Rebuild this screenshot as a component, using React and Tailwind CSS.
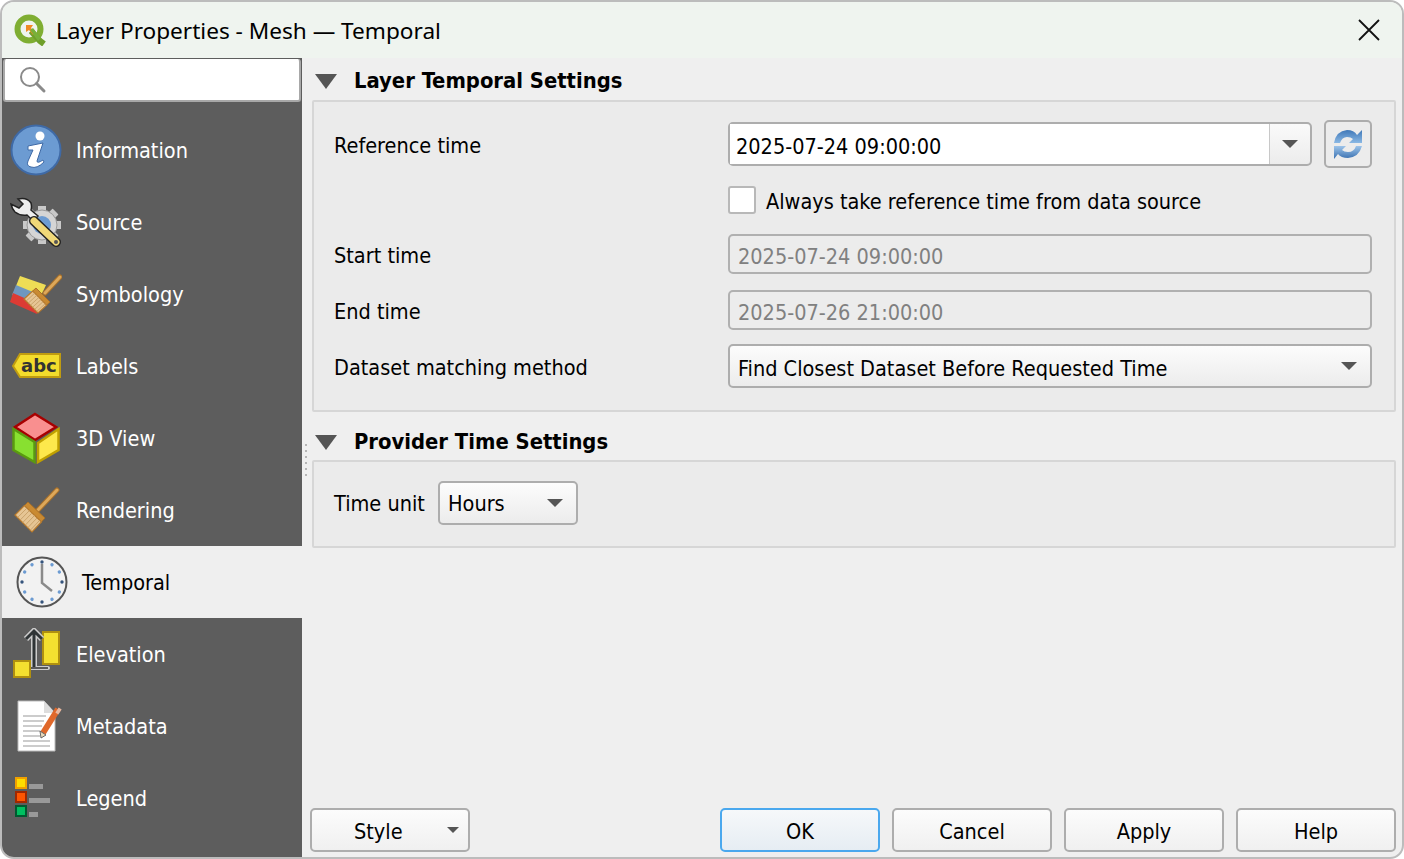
const font = "font-['DejaVu_Sans_Condensed','DejaVu_Sans',sans-serif]"

function Tri({ className }) {
  return (
    <svg className={className} viewBox="0 0 16 10" preserveAspectRatio="none">
      <path d="M0 0H16L8 10Z" fill="#555" />
    </svg>
  )
}

function QgisLogo() {
  return (
    <svg className="h-[32px] w-[32px] flex-none" viewBox="0 0 32 32">
      <circle cx="15" cy="15" r="11.5" fill="none" stroke="#7fae32" strokeWidth="6" />
      <path d="M17 17L26 27L30 30" fill="none" stroke="#6f9f2a" strokeWidth="6" />
      <path d="M12 11H19L17 14L21 19L19 21L15 16L12 18Z" fill="#f08a24" />
      <path d="M16 16L19 14L27 24L24 27Z" fill="#79b03a" />
    </svg>
  )
}

function SearchIcon() {
  return (
    <svg className="h-[28px] w-[28px]" viewBox="0 0 28 28" fill="none" stroke="#8a8a8a">
      <circle cx="11" cy="11" r="9" strokeWidth="2" />
      <path d="M17.5 17.5L25 25" strokeWidth="3" strokeLinecap="round" />
    </svg>
  )
}

function InfoIcon() {
  return (
    <svg viewBox="0 0 52 52" className="h-[52px] w-[52px]">
      <circle cx="26" cy="26" r="24.5" fill="#6c9bd2" stroke="#3f6aa6" strokeWidth="2" />
      <circle cx="30" cy="12" r="4.5" fill="#fff" />
      <path d="M18 22L33 19L27 37Q27 40 33 36L34 38Q27 45 21 43Q16 42 18 37L23 26L18 26Z" fill="#fff" stroke="#3f6aa6" strokeWidth="1" />
    </svg>
  )
}

function SourceIcon() {
  const teeth = [0, 45, 90, 135, 180, 225, 270, 315]
  return (
    <svg viewBox="0 0 52 52" className="h-[52px] w-[52px]">
      {teeth.map((a) => (
        <rect key={a} x="28" y="10" width="8" height="38" fill="#c9c9c9" transform={`rotate(${a} 32 29)`} />
      ))}
      <circle cx="32" cy="29" r="15" fill="#d5d5d5" stroke="#999" strokeWidth="1" />
      <circle cx="32" cy="29" r="9" fill="#6c9bd2" />
      <path d="M8 3Q17 1 21 7Q22 11 21 14L28 20L23 25L17 19Q10 20 5 16Q2 13 1 8L9 12L13 8Z" fill="#eee" stroke="#222" strokeWidth="1.5" />
      <path d="M24 25L46 46" stroke="#222" strokeWidth="10" strokeLinecap="round" />
      <path d="M24 25L46 46" stroke="#f0d878" strokeWidth="7" strokeLinecap="round" />
      <circle cx="46" cy="46" r="2" fill="#555" />
    </svg>
  )
}

// a, b: brush tip corners; c, d: the corners at the handle end
function Broom({ tip, base, a, b, c, d }) {
  const mix = (p, q, t) => [p[0] + (q[0] - p[0]) * t, p[1] + (q[1] - p[1]) * t]
  const c2 = mix(b, c, 0.72)
  const d2 = mix(a, d, 0.72)
  const pts = (list) => list.map((p) => p.join(',')).join(' ')
  const lines = [0.15, 0.3, 0.45, 0.6, 0.75, 0.9].map((t) => [mix(a, b, t), mix(d2, c2, t)])
  return (
    <g>
      <path d={`M${tip}L${base}`} stroke="#a8702a" strokeWidth="5" strokeLinecap="round" />
      <path d={`M${tip}L${base}`} stroke="#dda85a" strokeWidth="3" strokeLinecap="round" />
      <polygon points={pts([d2, c2, c, d])} fill="#c98a32" stroke="#a8702a" strokeWidth="1" />
      <polygon points={pts([a, b, c2, d2])} fill="#e6c594" stroke="#b87a2c" strokeWidth="1.2" />
      {lines.map(([p, q], i) => (
        <line key={i} x1={p[0]} y1={p[1]} x2={q[0]} y2={q[1]} stroke="#c39a62" strokeWidth="0.8" />
      ))}
    </g>
  )
}

function SymbologyIcon() {
  return (
    <svg viewBox="0 0 52 52" className="h-[52px] w-[52px]">
      <path d="M10 8L36 17L30 30L6 18Z" fill="#eedd55" />
      <path d="M6 17L30 27L28 38L2 27Z" fill="#6f97bf" />
      <path d="M3 25L28 36L27 46L0 34Z" fill="#dc3b34" />
      <Broom tip="50 9" base="35 25" a={[14, 31]} b={[28, 45]} c={[40, 34]} d={[26, 20]} />
    </svg>
  )
}

function LabelsIcon() {
  return (
    <svg viewBox="0 0 52 52" className="h-[52px] w-[52px]">
      <path d="M10 14H50V37H10L3 26Z" fill="#f3dc2c" stroke="#c09c10" strokeWidth="2" />
      <text x="11" y="32" fontFamily="DejaVu Sans" fontWeight="700" fontSize="18" fill="#333">abc</text>
    </svg>
  )
}

function ViewIcon() {
  return (
    <svg viewBox="0 0 52 52" className="h-[52px] w-[52px]">
      <path d="M25 2L46 15L25 28L5 15Z" fill="#f98f8f" stroke="#a80000" strokeWidth="2.5" />
      <path d="M3.5 17L24.5 30V50L3.5 38Z" fill="#88e030" stroke="#5a9a10" strokeWidth="2.5" />
      <path d="M28 31L48.500 17V38L28 50Z" fill="#fde84c" stroke="#c0a000" strokeWidth="2.5" />
    </svg>
  )
}

function RenderingIcon() {
  return (
    <svg viewBox="0 0 52 52" className="h-[52px] w-[52px]">
      <Broom tip="47 6" base="28 26" a={[5, 31]} b={[22, 48]} c={[35, 34]} d={[18, 18]} />
    </svg>
  )
}

function ClockIcon() {
  const marks = [0, 30, 60, 90, 120, 150, 180, 210, 240, 270, 300, 330]
  return (
    <svg viewBox="0 0 52 52" className="h-[52px] w-[52px]">
      <circle cx="26" cy="26" r="24.500" fill="#f2f2f2" stroke="#555" strokeWidth="2" />
      {marks.map((a) => (
        <circle key={a} cx="26" cy="6" r="1.700" fill={a % 90 === 0 ? '#35547c' : '#6c9bd2'} transform={`rotate(${a} 26 26)`} />
      ))}
      <path d="M26 8V27L36 35" fill="none" stroke="#8a8a8a" strokeWidth="2.500" />
    </svg>
  )
}

function ElevationIcon() {
  return (
    <svg viewBox="0 0 52 52" className="h-[52px] w-[52px]">
      <rect x="33" y="4" width="16" height="32" fill="#f4e030" stroke="#b09010" strokeWidth="2" />
      <path d="M14 40H38" stroke="#ccc" strokeWidth="4" strokeLinecap="round" />
      <path d="M14 40H38" stroke="#333" strokeWidth="1.500" />
      <path d="M24 39V3M16 11L24 3L32 11" fill="none" stroke="#ccc" strokeWidth="6" />
      <path d="M24 39V3M16 11L24 3L32 11" fill="none" stroke="#2f3436" strokeWidth="3" />
      <rect x="4" y="33" width="16" height="16" fill="#f4e030" stroke="#b09010" strokeWidth="2" />
    </svg>
  )
}

function MetadataIcon() {
  return (
    <svg viewBox="0 0 52 52" className="h-[52px] w-[52px]">
      <path d="M8 1H34L45 13V51H8Z" fill="#fff" stroke="#bbb" strokeWidth="1" />
      <path d="M34 1V13H45Z" fill="#ddd" />
      <path d="M13 16H36M13 21H34M13 26H32M13 31H30M13 36H30M13 41H40M13 46H40" stroke="#9a9a9a" strokeWidth="1.200" />
      <path d="M33 33L48 9" stroke="#e0682a" strokeWidth="6" />
      <path d="M47 10L50 12" stroke="#e8b8a0" strokeWidth="6" />
      <path d="M30 31L36 35L31 38Z" fill="#e8d8b8" stroke="#666" strokeWidth="1" />
    </svg>
  )
}

function LegendIcon() {
  return (
    <svg viewBox="0 0 52 52" className="h-[52px] w-[52px]">
      <rect x="6" y="6" width="10" height="10" fill="#ffdd00" stroke="#f0a000" strokeWidth="2" />
      <rect x="6" y="20" width="10" height="10" fill="#ff5500" stroke="#a02800" strokeWidth="2" />
      <rect x="6" y="34" width="10" height="10" fill="#00c060" stroke="#005a30" strokeWidth="2" />
      <rect x="19" y="12" width="14" height="5" fill="#999" />
      <rect x="19" y="26" width="21" height="5" fill="#999" />
      <rect x="19" y="40" width="9" height="5" fill="#999" />
    </svg>
  )
}

function RefreshIcon() {
  return (
    <svg className="h-[32px] w-[32px]" viewBox="0 0 32 32">
      <defs>
        <linearGradient id="refreshTop" x1="0" y1="0" x2="0" y2="1">
          <stop offset="0" stopColor="#3f78b8" />
          <stop offset="1" stopColor="#8ab8e4" />
        </linearGradient>
        <linearGradient id="refreshBottom" x1="0" y1="0" x2="0" y2="1">
          <stop offset="0" stopColor="#9cc4ea" />
          <stop offset="1" stopColor="#3a70b0" />
        </linearGradient>
      </defs>
      <path d="M2 15Q4 3 15 2Q22 2 25 7L30 2V15H17L21 11Q19 9 15 9Q10 9 8 15Z" fill="url(#refreshTop)" />
      <path d="M30 18Q27 29 16 30Q9 30 6 26L2 31V18H14L10 22Q12 24 16 24Q22 24 24 18Z" fill="url(#refreshBottom)" />
    </svg>
  )
}

const navItems = [
  ['Information', InfoIcon],
  ['Source', SourceIcon],
  ['Symbology', SymbologyIcon],
  ['Labels', LabelsIcon],
  ['3D View', ViewIcon],
  ['Rendering', RenderingIcon],
  ['Temporal', ClockIcon],
  ['Elevation', ElevationIcon],
  ['Metadata', MetadataIcon],
  ['Legend', LegendIcon],
]

function Sidebar() {
  return (
    <aside className="flex w-[300px] flex-none flex-col bg-[#5d5d5d]">
      <div className="mx-px mt-px flex h-[43px] items-center rounded-[3px] border-2 border-t-0 border-[#a8a8a8] bg-white pl-[14px]">
        <SearchIcon />
      </div>
      <nav className="pt-[12px]">
        {navItems.map(([label, Icon]) => {
          const active = label === 'Temporal'
          return (
            <div
              key={label}
              className={
                active
                  ? 'flex h-[72px] items-center gap-[14px] bg-[#efefef] pl-[14px] text-black'
                  : 'flex h-[72px] items-center gap-[14px] pl-[8px] text-white'
              }
            >
              <Icon />
              <span className="pt-[2px]">{label}</span>
            </div>
          )
        })}
      </nav>
    </aside>
  )
}

function SectionHeader({ title, className }) {
  return (
    <div className={`flex items-center ${className}`}>
      <Tri className="ml-[3px] mt-[2px] h-[15px] w-[22px]" />
      <h2 className="ml-[17px] pt-[1px] text-[21.8px] font-bold">{title}</h2>
    </div>
  )
}

function Label({ children, className = '' }) {
  return <span className={`pt-[4px] ${className}`}>{children}</span>
}

function Value({ children }) {
  return <span className="pt-[6px]">{children}</span>
}

function Button({ children, primary, className = '' }) {
  return (
    <button
      className={`flex h-[44px] w-[160px] items-center justify-center rounded-[5px] border-2 bg-gradient-to-b ${
        primary ? 'border-[#4aa8ee] from-[#f6f8fa] to-[#e6edf3]' : 'border-[#adadad] from-[#fcfcfc] to-[#f0f0f0]'
      } ${className}`}
    >
      <Label>{children}</Label>
    </button>
  )
}

function ReadOnlyField({ value }) {
  return (
    <div className="flex h-[40px] flex-1 items-center rounded-[5px] border-2 border-[#b0b0b0] bg-[#ececec] pl-[8px] text-[#808080]">
      <Value>{value}</Value>
    </div>
  )
}

export default function App() {
  return (
    <div className={`h-[859px] w-[1404px] overflow-hidden bg-white text-[21.5px] leading-none text-black ${font}`}>
      <div className="flex h-full flex-col overflow-hidden rounded-[14px] border-2 border-[#bcbcbc] bg-[#efefef]">
        <header className="flex h-[56px] flex-none items-center bg-[#eff4ef] pl-[12px]">
          <QgisLogo />
          <span className="ml-[10px] pt-[2px] font-['Noto_Sans',sans-serif] text-[22.6px]">Layer Properties - Mesh — Temporal</span>
          <svg className="ml-auto mr-[22px] h-[22px] w-[22px]" viewBox="0 0 22 22" fill="none" stroke="#111" strokeWidth="1.800">
            <path d="M1 1L21 21M21 1L1 21" />
          </svg>
        </header>

        <div className="flex min-h-0 flex-1">
          <Sidebar />

          <main className="relative flex min-w-0 flex-1 flex-col pb-[5px] pl-[8px] pr-[6px]">
            <div className="absolute left-[3px] top-[386px] h-[32px] w-[2px] bg-[repeating-linear-gradient(to_bottom,#b5b5b5_0,#b5b5b5_2px,transparent_2px,transparent_6px)]" />

            <SectionHeader title="Layer Temporal Settings" className="ml-[2px] h-[42px] pt-[2px]" />
            <section className="ml-[2px] h-[312px] rounded-[2px] border-2 border-[#d6d6d6] bg-[#ebebeb] pl-[20px] pr-[22px]">
              <div className="mt-[18px] flex items-center">
                <Label className="w-[394px]">Reference time</Label>
                <div className="flex h-[44px] flex-1 items-stretch rounded-[5px] border-2 border-[#adadad] bg-gradient-to-b from-[#fafafa] to-[#ececec]">
                  <div className="flex flex-1 items-center border-r border-[#c8c8c8] bg-white pl-[6px]">
                    <Value>2025-07-24 09:00:00</Value>
                  </div>
                  <div className="flex w-[40px] items-center justify-center">
                    <Tri className="h-[8px] w-[16px]" />
                  </div>
                </div>
                <div className="ml-[12px] flex h-[48px] w-[48px] items-center justify-center rounded-[5px] border-2 border-[#adadad] bg-[#ececec]">
                  <RefreshIcon />
                </div>
              </div>
              <div className="mt-[18px] flex items-center pl-[394px]">
                <div className="h-[28px] w-[28px] rounded-[3px] border-2 border-[#b8b8b8] bg-white" />
                <Label className="ml-[10px]">Always take reference time from data source</Label>
              </div>
              <div className="mt-[20px] flex items-center">
                <Label className="w-[394px]">Start time</Label>
                <ReadOnlyField value="2025-07-24 09:00:00" />
              </div>
              <div className="mt-[16px] flex items-center">
                <Label className="w-[394px]">End time</Label>
                <ReadOnlyField value="2025-07-26 21:00:00" />
              </div>
              <div className="mt-[14px] flex items-center">
                <Label className="w-[394px]">Dataset matching method</Label>
                <div className="flex h-[44px] flex-1 items-center justify-between rounded-[5px] border-2 border-[#adadad] bg-gradient-to-b from-[#fcfcfc] to-[#ececec] pl-[8px] pr-[13px]">
                  <Value>Find Closest Dataset Before Requested Time</Value>
                  <Tri className="h-[8px] w-[16px]" />
                </div>
              </div>
            </section>

            <SectionHeader title="Provider Time Settings" className="ml-[2px] mt-[8px] h-[40px] pt-[2px]" />
            <section className="ml-[2px] flex h-[88px] items-center rounded-[2px] border-2 border-[#d6d6d6] bg-[#ebebeb] pb-[2px] pl-[20px]">
              <span className="w-[104px] pt-[2px]">Time unit</span>
              <div className="flex h-[44px] w-[140px] items-center justify-between rounded-[5px] border-2 border-[#adadad] bg-gradient-to-b from-[#fcfcfc] to-[#ececec] pl-[8px] pr-[13px]">
                <span className="pt-[2px]">Hours</span>
                <Tri className="h-[8px] w-[16px]" />
              </div>
            </section>

            <footer className="mt-auto flex items-center gap-[12px]">
              <button className="flex h-[44px] w-[160px] items-center rounded-[5px] border-2 border-[#adadad] bg-gradient-to-b from-[#fcfcfc] to-[#f0f0f0] pl-[42px] pr-[9px]">
                <Label>Style</Label>
                <Tri className="ml-auto h-[6px] w-[12px]" />
              </button>
              <Button primary className="ml-auto">OK</Button>
              <Button>Cancel</Button>
              <Button>Apply</Button>
              <Button>Help</Button>
            </footer>
          </main>
        </div>
      </div>
    </div>
  )
}
